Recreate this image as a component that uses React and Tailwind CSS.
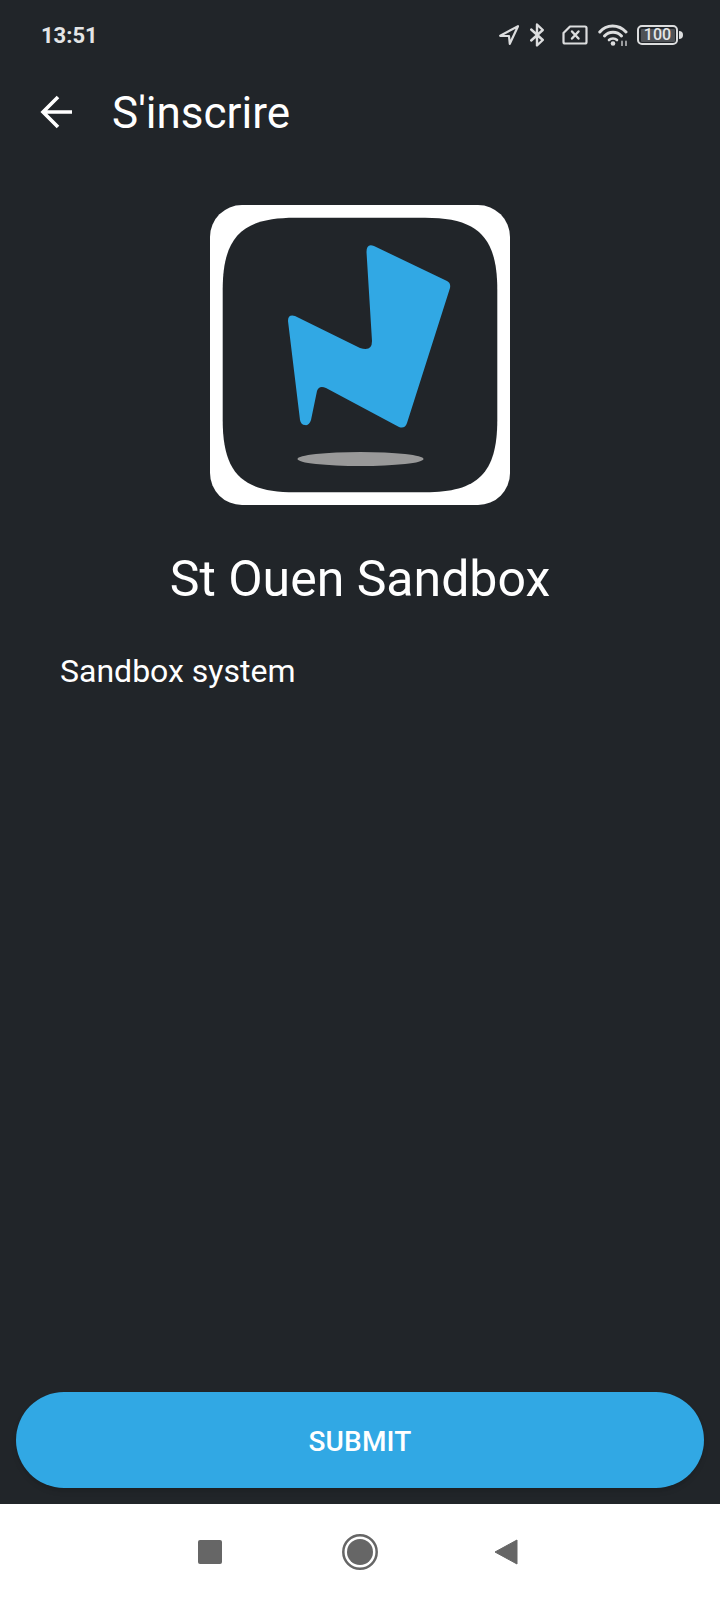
const font = { fontFamily: 'Roboto, sans-serif' }
const iconColor = '#dcddde'

function NavArrowIcon() {
  return (
    <svg width="20" height="20" viewBox="0 0 20 20" fill="none" stroke={iconColor} strokeWidth="2.2" strokeLinejoin="round">
      <path d="M19 1.2 L1.2 10.8 L10 11 L10.8 18.8 Z" />
    </svg>
  )
}

function BluetoothIcon() {
  return (
    <svg width="14" height="24" viewBox="0 0 14 24" fill="none" stroke={iconColor} strokeWidth="2.4" strokeLinejoin="round" strokeLinecap="round">
      <path d="M1.2 6.5 L12.8 17 L7 22.5 L7 1.5 L12.8 7 L1.2 17.5" />
    </svg>
  )
}

function SimIcon() {
  return (
    <svg width="26" height="20" viewBox="0 0 26 20" fill="none" stroke={iconColor} strokeWidth="2.2" strokeLinejoin="round" strokeLinecap="round">
      <path d="M8 1.5 H23 A1.5 1.5 0 0 1 24.5 3 V17 A1.5 1.5 0 0 1 23 18.5 H3 A1.5 1.5 0 0 1 1.5 17 V8 Z" />
      <path d="M10 6.5 L16.5 13.5 M16.5 6.5 L10 13.5" strokeWidth="2.4" />
    </svg>
  )
}

function WifiIcon() {
  return (
    <svg width="30" height="22" viewBox="0 0 30 22" fill="none" stroke={iconColor} strokeWidth="3" strokeLinecap="round">
      <path d="M1.8 8 C8.5 0 20.5 0 28 8" />
      <path d="M6.5 12 C11 7 19 7 23.5 12" />
      <path d="M11 16 C13 14 17 14 19 16" strokeWidth="2.6" />
      <circle cx="15" cy="19.5" r="2.3" fill={iconColor} stroke="none" />
      <path d="M24 17.5 V21.5 M28 17.5 V21.5" strokeWidth="1.8" stroke="#a9abad" />
    </svg>
  )
}

function BatteryIcon() {
  return (
    <div className="flex items-center gap-[1px]">
      <div className="relative flex h-[20px] w-[41px] items-center justify-center rounded-[5px] border-[2.5px] border-[#dcddde]">
        <div className="absolute inset-y-[1.5px] right-[1.5px] left-[1.5px] rounded-[1px] bg-[#4f5256]" />
        <span className="relative text-[16px] leading-none font-medium text-[#e4e5e6]">100</span>
      </div>
      <div className="h-[8px] w-[4px] rounded-r-sm bg-[#dcddde]" />
    </div>
  )
}

function Logo() {
  return (
    <div className="h-[300px] w-[300px] rounded-[32px] bg-white">
      <svg width="300" height="300" viewBox="0 0 300 300">
        <path
          d="M12.7 85 C12.7 32 32 12.7 85 12.7 H215 C268 12.7 287.3 32 287.3 85 V215 C287.3 268 268 287.3 215 287.3 H85 C32 287.3 12.7 268 12.7 215 Z"
          fill="#212529"
        />
        <path
          d="M164 41 L237 76 Q241 78 240 83 L197 218 Q195 224 189 222 L116 183 Q109 180 107 186 L101 215 Q99 221 95 220 Q91 220 90 215 L78 116 Q78 109 85 111 L150 143 Q162 147 162 136 L156.5 47 Q156.5 38 164 41 Z"
          fill="#31a8e4"
        />
        <ellipse cx="150.5" cy="254" rx="63" ry="7" fill="#999999" />
      </svg>
    </div>
  )
}

export default function App() {
  return (
    <div className="flex h-[1600px] w-[720px] flex-col bg-[#212529] text-white" style={font}>
      {/* Status bar */}
      <div className="flex h-[70px] items-center justify-between pr-[37px] pl-[41px]">
        <span className="text-[22px] font-bold text-[#e4e5e6]">13:51</span>
        <div className="flex items-center">
          <NavArrowIcon />
          <div className="ml-[11px]"><BluetoothIcon /></div>
          <div className="ml-[18px]"><SimIcon /></div>
          <div className="ml-[10px]"><WifiIcon /></div>
          <div className="ml-[9px]"><BatteryIcon /></div>
        </div>
      </div>

      {/* Toolbar */}
      <div className="flex h-[84px] items-center pl-[40px]">
        <svg width="34" height="34" viewBox="0 0 34 34" fill="none" stroke="white" strokeWidth="3.6">
          <path d="M32 17 H4 M18 2 L3 17 L18 32" />
        </svg>
        <span className="mt-[1px] ml-[38px] text-[44px] leading-none">S'inscrire</span>
      </div>

      {/* Content */}
      <div className="mt-[51px] flex justify-center"><Logo /></div>
      <div className="mt-[41px] text-center text-[50px] leading-[66px]">St Ouen Sandbox</div>
      <div className="mt-[38px] pl-[60px] text-[32px] leading-[42px]">Sandbox system</div>

      {/* Submit */}
      <div className="mt-auto px-[16px] pb-[16px]">
        <button className="h-[96px] w-full rounded-[48px] bg-[#31a8e4] pt-[3px] text-[28px] font-medium tracking-[0.2px] text-white shadow-md">SUBMIT</button>
      </div>

      {/* Android nav */}
      <div className="flex h-[96px] items-center bg-white pl-[198px]">
        <div className="h-[24px] w-[24px] rounded-[2px] bg-[#666666]" />
        <svg className="ml-[120px]" width="36" height="36" viewBox="0 0 36 36" fill="none">
          <circle cx="18" cy="18" r="16.7" stroke="#666666" strokeWidth="2.5" />
          <circle cx="18" cy="18" r="13" fill="#666666" />
        </svg>
        <svg className="ml-[116px]" width="24" height="26" viewBox="0 0 24 26">
          <path d="M23 1 V25 L1 13 Z" fill="#666666" stroke="#666666" strokeLinejoin="round" />
        </svg>
      </div>
    </div>
  )
}
